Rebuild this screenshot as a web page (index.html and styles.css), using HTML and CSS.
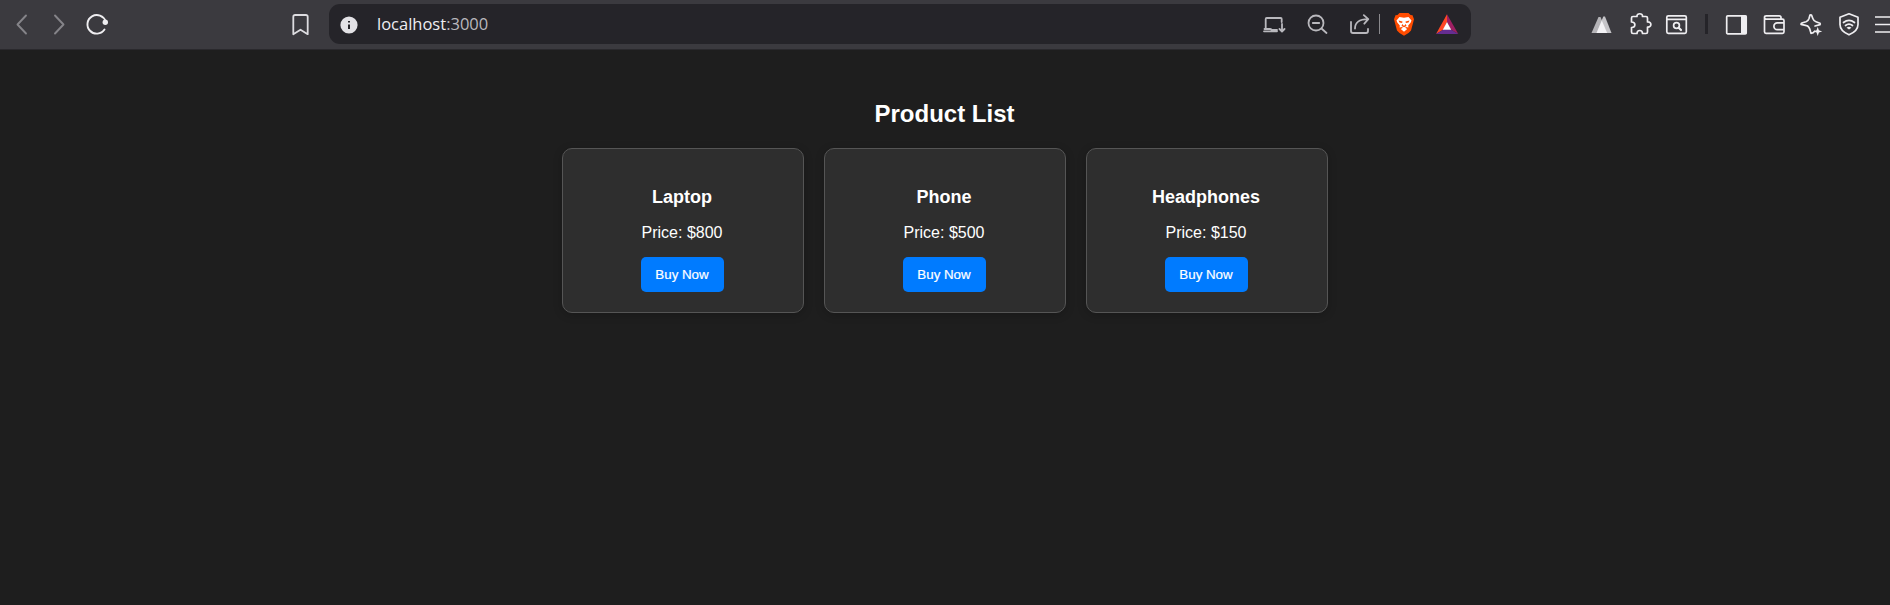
FILE: index.html
```html
<!DOCTYPE html>
<html lang="en">
<head>
<meta charset="utf-8">
<title>Product List</title>
<link rel="stylesheet" href="styles.css">
</head>
<body>
<header class="toolbar">
  <nav class="nav">
    <svg class="icon dim" viewBox="0 0 24 24"><path d="M16 3.500 7.500 12.500 16 21.500"/></svg>
    <svg class="icon dim" viewBox="0 0 24 24"><path d="M7 3.500 15.500 12.500 7 21.500"/></svg>
    <svg class="icon reload" viewBox="0 0 24 24"><path d="M19.500 17.500A9.300 9.300 0 1 1 20.600 9.500"/><circle class="solid" cx="20.300" cy="10.300" r="2.700"/></svg>
  </nav>
  <svg class="icon bookmark" viewBox="0 0 24 24"><path d="M7 3h11a1.700 1.700 0 0 1 1.700 1.700V22.200L12.500 17.700 5.300 22.200V4.700A1.700 1.700 0 0 1 7 3Z"/></svg>
  <div class="address">
    <svg class="icon info" viewBox="0 0 24 24"><circle class="solid" cx="12" cy="13" r="8.600"/><path class="cut" d="M12 12.500V17M12 9v1.600"/></svg>
    <span class="url">localhost<span class="port">:3000</span></span>
    <div class="actions">
      <svg class="icon" viewBox="0 0 24 24"><path d="M3.700 17V7q0-1 1-1h14q1 0 1 1v3M2 19.300h13M2.500 17h5.500q1.500 0 1.500 1h5.500M20 12v7M17.500 17 20 19.500l2.500-2.500"/></svg>
      <svg class="icon" viewBox="0 0 24 24"><circle cx="11" cy="11" r="7.500"/><path d="M7.800 11h6.400M16.500 16.500l5 4.500"/></svg>
      <svg class="icon" viewBox="0 0 24 24"><path d="M3 10v9q0 2 2 2h13q2 0 2-2v-2M7 16.500c0-6 4-9.300 13-9.300M15.800 3.200 20.300 7.200l-4 4.500"/></svg>
    </div>
    <span class="rule"></span>
    <svg class="icon brave" viewBox="0 0 24 24"><path fill="#ff4c00" d="M7.500 1h9l2 2 2 .3 1.500 4-.7 2.700L19 18.500l-2.500 2.500-4.500 2.800L7.500 21 5 18.500 2.700 10 2 7.300l1.500-4 2-.3Z"/><path fill="#fff" d="m7.500 5 4.500.7 4.500-.7 3 3.500-.8 2-2.500 3 .2 2-2.400-.5-.8.800 2 1.200L12 19.700 8.800 17l2-1.200L10 15l-2.400.5.200-2-2.500-3-.8-2Z"/><path fill="#ff4c00" d="m6.500 8.500 4 1-.4 1.500-2.600-.6ZM17.500 8.500l-4 1 .4 1.500 2.600-.6ZM10.300 12l1.700 2 1.700-2 .8 2-2.500 1.300L9.500 14Z"/></svg>
    <svg class="icon bat" viewBox="0 0 24 24"><path fill="#ff4724" d="M12 2.300 1 22 8.500 17.500 12 10Z"/><path fill="#9e1f63" d="M12 2.300 23.300 22 15.800 17.500 12 10Z"/><path fill="#662d91" d="M1 22 8.500 17.500h7.300L23.300 22Z"/><path fill="#fff" d="m12 10-4.200 7.800h8.400Z"/></svg>
  </div>
  <div class="tools">
    <svg class="icon" viewBox="0 0 24 24"><path fill="#b5b4b8" d="M1.500 21 8.500 5h2l7 16Z"/><path fill="#c5c4c8" d="M6.500 21 13.300 4.500H15L21.500 21Z"/><path fill="#f3f2f5" d="M6.500 21 11.800 8.500 17.200 21Z"/></svg>
    <svg class="icon" viewBox="0 0 24 24"><path d="M5 4.500H9C8.500.8 15 .8 14.500 4.500H18q1.500 0 1.500 1.500V10C24 9.500 24 15.500 19.500 15v5q0 1.500-1.500 1.500H14.500C14.500 17.500 9 17.500 9 21.500H5q-1.500 0-1.500-1.500V15.500C8 15.500 8 10 3.500 10V6q0-1.500 1.500-1.500Z"/></svg>
    <svg class="icon finder" viewBox="0 0 24 24"><rect x="1.800" y="3.800" width="19.500" height="17.500" rx="1.500"/><path d="M2 7.300h19"/><circle cx="11.500" cy="13.500" r="2.900"/><path class="heavy" d="m13.700 15.700 2.300 2.300"/></svg>
    <span class="rule dark"></span>
    <svg class="icon" viewBox="0 0 24 24"><rect x="2.700" y="3.800" width="19.500" height="18" rx="1"/><path class="solid" d="M17 3.500h5.500V22H17Z"/></svg>
    <svg class="icon" viewBox="0 0 24 24"><path d="M19 7.200V5.500q0-1.700-1.700-1.700H4.200q-1.700 0-1.700 1.700V19.800q0 1.500 1.500 1.500H20.500q1.500 0 1.500-1.500V8.700q0-1.500-1.500-1.500H4Q2.500 7 2.500 5.500M22 10.800H15.300a3.400 3.400 0 0 0 0 6.800H22"/></svg>
    <svg class="icon star" viewBox="0 0 24 24"><path d="M15.700 19.200Q14.500 21.300 12 21.300L11.500 19.500Q10.200 14 7.500 13.600L2 12.300Q2 11.300 2.800 11L7 9.800Q9.200 9 10 6.500L11 3Q12 2.500 12.500 3L13.800 6.500Q14.700 9 17 9.800L21 11.300Q21.500 12 21 12.600L16 14"/><path class="solid" d="m18.700 15 1.200 3.200 3.300 1.200-3.300 1.200-1.200 3.300-1.200-3.300-3.300-1.200 3.300-1.200Z"/></svg>
    <svg class="icon" viewBox="0 0 24 24"><path d="m12 1.800 9 3.500v7.200q0 6.500-9 10.300-9-3.800-9-10.300V5.300ZM6.500 10.500q5.500-4.300 11 0M8.500 13.500q3.500-2.800 7 0"/><path class="solid" d="M9.500 15.700q2.500-1.700 5 0L12 17.500Z"/></svg>
    <svg class="icon menu" viewBox="0 0 24 24"><path d="M.5 5H20M.5 12.500H20M.5 20H20"/></svg>
  </div>
</header>
<main class="page">
  <h2 class="title">Product List</h2>
  <div class="products">
    <article class="card"><h3 class="name">Laptop</h3><p class="price">Price: $800</p><button class="buy">Buy Now</button></article>
    <article class="card"><h3 class="name">Phone</h3><p class="price">Price: $500</p><button class="buy">Buy Now</button></article>
    <article class="card"><h3 class="name">Headphones</h3><p class="price">Price: $150</p><button class="buy">Buy Now</button></article>
  </div>
</main>
</body>
</html>
```
FILE: styles.css
```css
* { box-sizing: border-box; }
body {
  margin: 0;
  height: 605px;
  overflow: hidden;
  background: #1e1e1e;
  color: #fff;
  font-family: "Liberation Sans", Arial, sans-serif;
}
.toolbar {
  display: flex;
  align-items: center;
  height: 50px;
  padding-left: 10px;
  padding-bottom: 1px;
  background: #3b3a3f;
  border-bottom: 1px solid #2a292d;
}
.icon {
  flex: none;
  width: 24px;
  height: 24px;
  fill: none;
  stroke: #efeef1;
  stroke-width: 1.7;
  stroke-linecap: round;
  stroke-linejoin: round;
}
.icon .solid { fill: #efeef1; stroke: none; }
.icon .heavy { stroke-width: 2.2; }
.nav { display: flex; gap: 14px; }
.nav .dim { stroke: #858489; stroke-width: 1.9; }
.reload { margin-left: -1px; stroke-width: 1.9; }
.bookmark { margin-left: 179px; stroke: #dddce0; stroke-width: 1.8; }
.address {
  display: flex;
  flex: none;
  align-items: center;
  width: 1142px;
  height: 40px;
  margin-left: 17px;
  padding: 0 12px 0 8px;
  border-radius: 11px;
  background: #252429;
}
.info .solid { fill: #e3e2e6; }
.info .cut { stroke: #252429; stroke-width: 2; stroke-linecap: butt; }
.url {
  margin-left: 16px;
  color: #eeedf1;
  font: 16.5px/24px "Open Sans", "Noto Sans", sans-serif;
}
.port { color: #b9b8bd; }
.actions { display: flex; gap: 19px; margin-left: auto; }
.actions .icon { stroke: #b9b8bd; stroke-width: 1.8; }
.rule { flex: none; width: 1px; height: 20px; margin-left: 7px; background: #8a898d; }
.brave { margin-left: 12px; stroke: none; }
.bat { margin-left: 19px; stroke: none; }
.tools { display: flex; align-items: center; gap: 14px; margin-left: 119px; }
.tools .icon:first-child { stroke: none; }
.finder { margin-left: -1px; }
.dark { width: 3px; margin: 0 2px 0 2px; background: #252429; }
.star { margin-left: -1px; }
.menu { margin-right: -20px; }
.page { display: flex; flex-direction: column; align-items: center; padding-top: 50px; }
.title { margin: 0 1px 20px 0; font-size: 24px; line-height: 28px; }
.products { display: flex; gap: 20px; }
.card {
  width: 242px;
  height: 165px;
  padding: 38px 21px 20px 19px;
  border: 1px solid #555;
  border-radius: 10px;
  background: #2e2e2e;
  box-shadow: 0 2px 10px rgba(0, 0, 0, .2);
  text-align: center;
}
.name { margin: 0; font-size: 18px; line-height: 20px; }
.price { margin: 17px 0 15px; font-size: 16px; line-height: 18px; }
.buy {
  display: block;
  width: 83px;
  height: 35px;
  margin: 0 auto;
  padding: 0;
  border: 0;
  border-radius: 5px;
  background: #007bff;
  color: #fff;
  font: 13.333px "Liberation Sans", Arial, sans-serif;
  -webkit-text-stroke: .2px #fff;
}
```
